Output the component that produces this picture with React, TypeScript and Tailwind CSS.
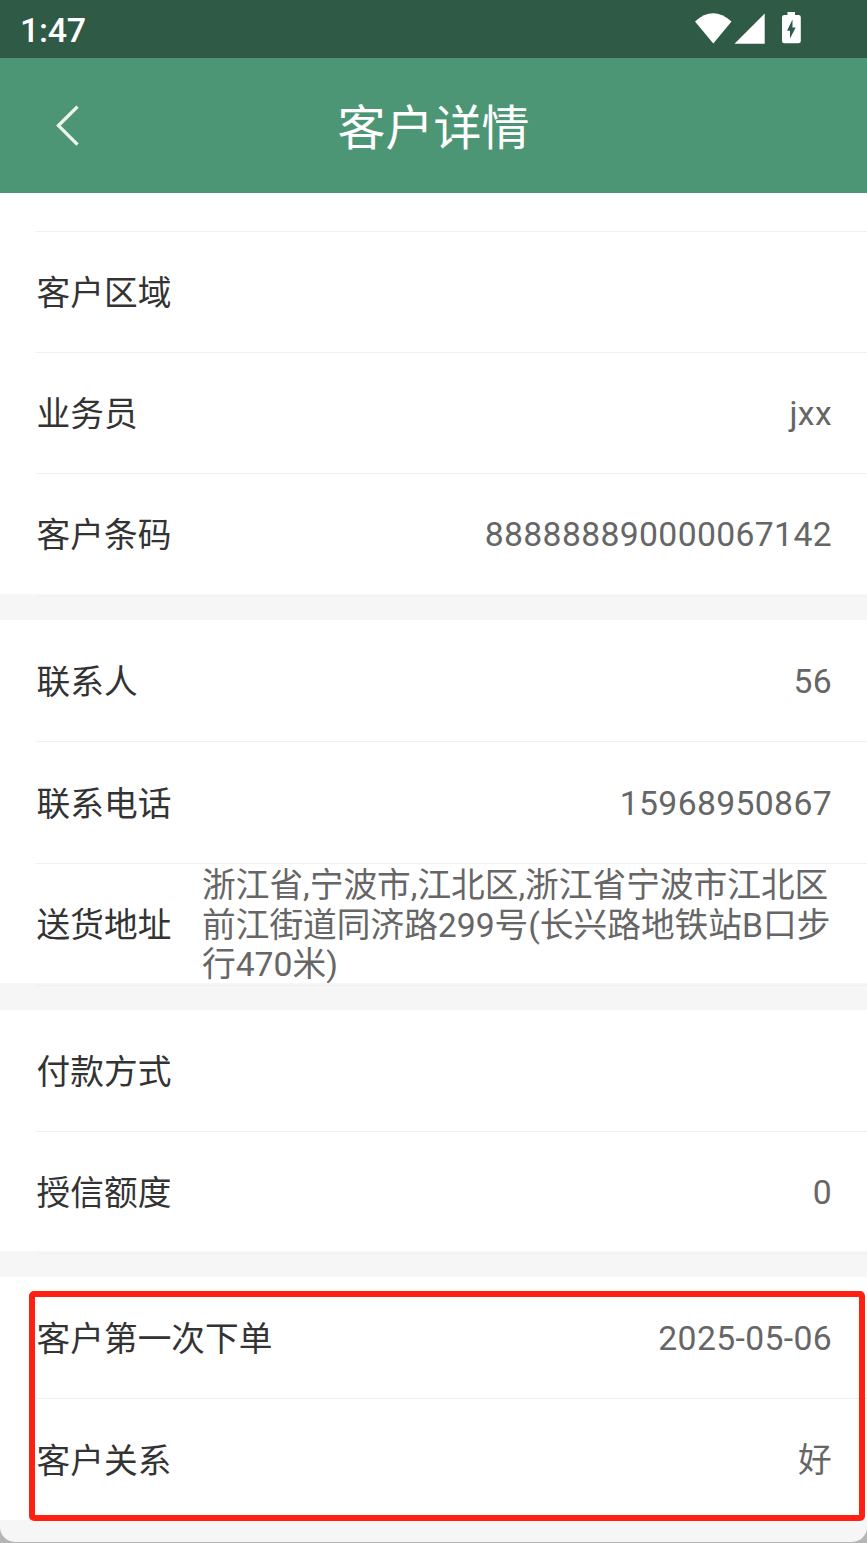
import React from "react";

type RowProps = {
  label: string;
  value?: React.ReactNode;
  height: string;
  divider?: boolean;
};

function Row({ label, value, height, divider = false }: RowProps) {
  return (
    <div
      className={`ml-9 flex items-center pr-[35px] ${height} ${
        divider ? "border-b border-[#f0f0f0]" : ""
      }`}
    >
      <span className="shrink-0 whitespace-nowrap pt-[4px] pl-[0.6px] text-[#333333]">{label}</span>
      <span className="ml-auto pt-[2px] text-right tracking-[0.36px] text-[#666666]">{value}</span>
    </div>
  );
}

function Gap({ height }: { height: string }) {
  return (
    <div className={`bg-[#f6f6f6] pt-[2px] ${height}`}>
      <div className="ml-9 h-px bg-[#f0f0f0]" />
    </div>
  );
}

function StatusBar() {
  return (
    <div className="flex h-[58px] items-center bg-[#2f5a46] pl-5 text-white">
      <span className="pt-[2px] text-[34px] leading-[40px] font-medium tracking-[-0.3px]">1:47</span>
      <svg className="ml-auto mr-[61px] shrink-0" width="112" height="58" viewBox="0 0 112 58" fill="#fff">
        <path d="M1 21.5Q19 5 37.5 21.5L19.3 43.5Z" />
        <path d="M70.7 13.5V43.7H40.5Z" />
        <path
          fillRule="evenodd"
          d="M93.5 12H101V15H104.5Q106.8 15 106.8 17.3V41Q106.8 43.3 104.5 43.3H90.3Q88 43.3 88 41V17.3Q88 15 90.3 15H93.5ZM98.5 19.5L93 30.7H96V38.5L101.7 27.5H98.5Z"
        />
      </svg>
    </div>
  );
}

function Header() {
  return (
    <header className="grid h-[135px] grid-cols-[100px_1fr_100px] items-center bg-[#4d9675] text-white">
      <svg className="ml-[54px]" width="28" height="44" viewBox="0 0 28 44" fill="none">
        <path d="M23.5 2.6L4.5 21.6L23.5 40.6" stroke="#eef5f1" strokeWidth="3.4" />
      </svg>
      <h1 className="pt-[7px] text-center text-[48px] leading-[56px] font-normal">客户详情</h1>
    </header>
  );
}

export default function App() {
  return (
    <div
      lang="zh-CN"
      className="h-[1543px] w-[867px] overflow-hidden bg-[#b5b5b5] font-[Roboto,'Noto_Sans_CJK_SC',sans-serif] text-[33.7px] leading-[39.5px]"
    >
      <div className="flex h-[1542px] flex-col overflow-hidden rounded-b-[15px] bg-[#f6f6f6]">
        <StatusBar />
        <Header />
        <section className="bg-white">
          <div className="ml-9 h-[39px] border-b border-[#f0f0f0]" />
          <Row label="客户区域" height="h-[121px]" divider />
          <Row label="业务员" value="jxx" height="h-[121px]" divider />
          <Row label="客户条码" value="888888890000067142" height="h-[120px]" />
        </section>
        <Gap height="h-[26px]" />
        <section className="bg-white">
          <Row label="联系人" value="56" height="h-[122px]" divider />
          <Row label="联系电话" value="15968950867" height="h-[122px]" divider />
          <div className="ml-9 flex h-[119px] items-center">
            <span className="w-[166px] shrink-0 pt-[4px] pl-[0.6px] text-[#333333]">送货地址</span>
            <p className="whitespace-nowrap pt-[4px] text-[#666666]">
              浙江省,宁波市,江北区,浙江省宁波市江北区
              <br />
              前江街道同济路299号(长兴路地铁站B口步
              <br />
              行470米)
            </p>
          </div>
        </section>
        <Gap height="h-[27px]" />
        <section className="bg-white">
          <Row label="付款方式" height="h-[122px]" divider />
          <Row label="授信额度" value="0" height="h-[119px]" />
        </section>
        <Gap height="h-[26px]" />
        <section className="relative bg-white">
          <Row label="客户第一次下单" value="2025-05-06" height="h-[122px]" divider />
          <Row label="客户关系" value="好" height="h-[121px]" />
          <div className="absolute top-[14px] left-[29px] h-[230px] w-[836px] rounded-[5px] border-[6px] border-[#ff2011]" />
        </section>
      </div>
    </div>
  );
}
